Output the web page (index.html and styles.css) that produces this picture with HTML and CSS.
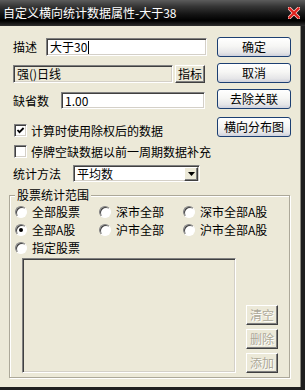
FILE: index.html
```html
<!DOCTYPE html>
<html lang="zh">
<head>
<meta charset="utf-8">
<link rel="stylesheet" href="styles.css">
</head>
<body>
<div class="win">
  <div class="titlebar">
    <span class="title">自定义横向统计数据属性-大于38</span>
    <svg class="close" width="12" height="12" viewBox="0 0 12 12">
      <path d="M1.5 1.5 L10.5 10.5 M10.5 1.5 L1.5 10.5" stroke="#ffd0d0" stroke-width="3.6" stroke-linecap="square"/>
      <path d="M1.5 1.5 L10.5 10.5 M10.5 1.5 L1.5 10.5" stroke="#e0201c" stroke-width="2.2" stroke-linecap="square"/>
    </svg>
  </div>
  <div class="mainrow">
    <div class="client">
      <div class="top">
        <div class="form">
          <div class="row r1">
            <span class="lbl l1">描述</span>
            <div class="edit e-desc">大于30<span class="caret"></span></div>
          </div>
          <div class="row r2">
            <div class="edit e-ind">强()日线</div>
            <div class="cbtn ind-btn">指标</div>
          </div>
          <div class="row r3">
            <span class="lbl l3">缺省数</span>
            <div class="edit e-def">1.00</div>
          </div>
          <div class="check c1">
            <span class="box"><svg width="9" height="9" viewBox="0 0 9 9"><polyline points="1.5,4 3.5,6.2 7.6,2" fill="none" stroke="#000" stroke-width="1.8"/></svg></span>
            <span class="ctext">计算时使用除权后的数据</span>
          </div>
          <div class="check c2">
            <span class="box"></span>
            <span class="ctext">停牌空缺数据以前一周期数据补充</span>
          </div>
          <div class="row r6">
            <span class="lbl l6">统计方法</span>
            <div class="combo">
              <span class="ctxt">平均数</span>
              <span class="drop"><svg width="7" height="4" viewBox="0 0 7 4"><path d="M0 0 H7 L3.5 4 Z" fill="#000"/></svg></span>
            </div>
          </div>
        </div>
        <div class="btns">
          <div class="xpbtn">确定</div>
          <div class="xpbtn">取消</div>
          <div class="xpbtn">去除关联</div>
          <div class="xpbtn b4">横向分布图</div>
        </div>
      </div>
      <fieldset class="group">
        <legend class="glabel">股票统计范围</legend>
        <div class="radios">
          <div class="ritem"><span class="radio"></span><span class="rtext">全部股票</span></div>
          <div class="ritem"><span class="radio"></span><span class="rtext">深市全部</span></div>
          <div class="ritem"><span class="radio"></span><span class="rtext">深市全部A股</span></div>
          <div class="ritem"><span class="radio on"></span><span class="rtext">全部A股</span></div>
          <div class="ritem"><span class="radio"></span><span class="rtext">沪市全部</span></div>
          <div class="ritem"><span class="radio"></span><span class="rtext">沪市全部A股</span></div>
          <div class="ritem"><span class="radio"></span><span class="rtext">指定股票</span></div>
        </div>
        <div class="listrow">
          <div class="listbox"></div>
          <div class="lbtns">
            <div class="cbtn dis">清空</div>
            <div class="cbtn dis">删除</div>
            <div class="cbtn dis">添加</div>
          </div>
        </div>
      </fieldset>
    </div>
    <div class="edge"></div>
  </div>
  <div class="bottom"></div>
</div>
</body>
</html>
```

FILE: styles.css
```css
html, body {
  margin: 0;
  padding: 0;
}
body {
  width: 305px;
  height: 390px;
  overflow: hidden;
  background: #1e1e1e;
  font-family: "Noto Sans CJK SC", "Liberation Sans", sans-serif;
  font-size: 12px;
  line-height: 14px;
  color: #000;
}
.win {
  display: flex;
  flex-direction: column;
  width: 305px;
  height: 390px;
}
.titlebar {
  height: 26px;
  flex: none;
  display: flex;
  align-items: center;
  justify-content: space-between;
  padding: 0 5px 0 3px;
  box-sizing: border-box;
  color: #fff;
  background: linear-gradient(to bottom, #5c5c5c 0%, #353535 25%, #141414 55%, #000 80%, #2e2e2e 100%);
}
.title {
  font-size: 12px;
  white-space: nowrap;
}
.close {
  margin-top: -1px;
}
.mainrow {
  display: flex;
  height: 361px;
  flex: none;
}
.client {
  width: 300px;
  box-sizing: border-box;
  background: #ece9d8;
  padding-left: 13px;
}
.edge {
  width: 5px;
  box-sizing: border-box;
  background: #1e1e1e;
  border-left: 1px solid #8c8a80;
}
.bottom {
  height: 3px;
  background: #1e1e1e;
}
.top {
  display: flex;
  gap: 10px;
}
.form {
  width: 194px;
  padding-top: 12px;
  white-space: nowrap;
}
.row {
  display: flex;
  align-items: center;
}
.lbl {
  flex: none;
}
.edit {
  box-sizing: border-box;
  height: 100%;
  border: 1px solid;
  border-color: #808080 #fff #fff #808080;
  box-shadow: inset 1px 1px 0 #404040, inset -1px -1px 0 #d4d0c8;
  background: #fff;
  padding-left: 3px;
  display: flex;
  align-items: center;
}
.caret {
  display: inline-block;
  width: 1px;
  height: 13px;
  background: #000;
  margin-left: 1px;
}
.r1 { height: 18px; }
.l1 { width: 33px; }
.e-desc { width: 161px; }
.r2 { height: 18px; margin-top: 9px; }
.e-ind { width: 160px; background: #ece9d8; }
.ind-btn { margin-left: 2px; width: 30px; height: 18px; }
.r3 { height: 17px; margin-top: 9px; }
.l3 { width: 48px; }
.e-def { width: 144px; }
.check {
  display: flex;
  align-items: center;
  height: 13px;
  white-space: nowrap;
}
.c1 { margin-top: 15px; }
.c2 { margin-top: 8px; }
.box {
  flex: none;
  width: 13px;
  height: 13px;
  margin-left: 1px;
  box-sizing: border-box;
  border: 1px solid;
  border-color: #808080 #fff #fff #808080;
  box-shadow: inset 1px 1px 0 #404040, inset -1px -1px 0 #d4d0c8;
  background: #fff;
  display: flex;
  align-items: center;
  justify-content: center;
}
.ctext {
  flex: none;
  margin-left: 4px;
}
.r6 { height: 17px; margin-top: 7px; }
.l6 { width: 60px; }
.combo {
  box-sizing: border-box;
  width: 127px;
  height: 17px;
  border: 1px solid;
  border-color: #808080 #fff #fff #808080;
  box-shadow: inset 1px 1px 0 #404040, inset -1px -1px 0 #d4d0c8;
  background: #fff;
  display: flex;
  align-items: center;
  justify-content: space-between;
  padding: 0 1px 0 3px;
}
.drop {
  width: 14px;
  height: 14px;
  box-sizing: border-box;
  background: #ece9d8;
  border: 1px solid;
  border-color: #fff #404040 #404040 #fff;
  box-shadow: inset -1px -1px 0 #808080;
  display: flex;
  align-items: center;
  justify-content: center;
}
.btns {
  width: 74px;
  padding-top: 11px;
  display: flex;
  flex-direction: column;
  gap: 6px;
}
.xpbtn {
  height: 20px;
  box-sizing: border-box;
  border: 1px solid #1c3f72;
  border-radius: 3px;
  background: linear-gradient(to bottom, #ffffff 0%, #f6f6f4 45%, #e6e6e8 80%, #cfd1dc 100%);
  display: flex;
  align-items: center;
  justify-content: center;
  white-space: nowrap;
}
.b4 { margin-top: 2px; }
.cbtn {
  box-sizing: border-box;
  background: #ece9d8;
  border: 1px solid;
  border-color: #fff #404040 #404040 #fff;
  box-shadow: inset -1px -1px 0 #808080;
  display: flex;
  align-items: center;
  justify-content: center;
  white-space: nowrap;
}
.group {
  margin: 6px 0 0 -4px;
  width: 281px;
  box-sizing: border-box;
  padding: 1px 11px 4px 5px;
  border: 1px solid #aca899;
  box-shadow: inset 1px 1px 0 #fff, 1px 1px 0 #fff;
  min-width: 0;
}
.glabel {
  padding: 0 2px;
  background: #ece9d8;
  line-height: 14px;
}
.radios {
  display: grid;
  grid-template-columns: 84px 84px 1fr;
  grid-auto-rows: 18px;
  white-space: nowrap;
}
.ritem {
  display: flex;
  align-items: center;
}
.radio {
  flex: none;
  width: 12px;
  height: 12px;
  box-sizing: border-box;
  border-radius: 50%;
  border: 1px solid;
  border-color: #808080 #fff #fff #808080;
  box-shadow: inset 1px 1px 0 #404040;
  background: #fff;
  display: flex;
  align-items: center;
  justify-content: center;
}
.radio.on::after {
  content: "";
  width: 4px;
  height: 4px;
  border-radius: 50%;
  background: #000;
}
.rtext { margin-left: 5px; }
.listrow {
  display: flex;
  align-items: flex-end;
  margin-top: 1px;
}
.listbox {
  margin-left: 7px;
  width: 214px;
  height: 115px;
  box-sizing: border-box;
  border: 1px solid;
  border-color: #808080 #fff #fff #808080;
  box-shadow: inset 1px 1px 0 #404040, inset -1px -1px 0 #d4d0c8;
  background: #ece9d8;
}
.lbtns {
  margin-left: 10px;
  display: flex;
  flex-direction: column;
  gap: 4px;
}
.dis {
  width: 32px;
  height: 20px;
  color: #aca899;
  text-shadow: 1px 1px 0 #fff;
}
```
